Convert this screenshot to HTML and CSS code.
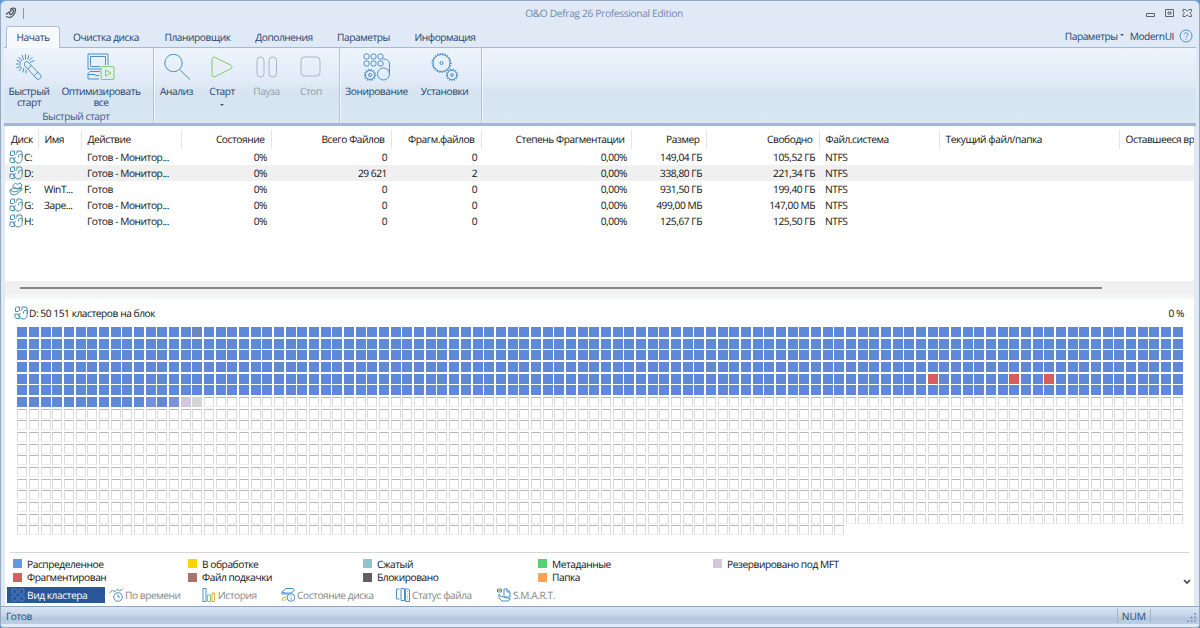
FILE: index.html
```html
<!DOCTYPE html>
<html lang="ru">
<head>
    <meta charset="UTF-8">
    <title>O&amp;O Defrag 26 Professional Edition</title>
    <link rel="stylesheet" href="styles.css">
</head>
<body>
<svg class="defs" width="0" height="0">
    <symbol id="disk" viewBox="0 0 14 14">
        <path d="M1.500 5V2L2.500 1H5.500v3.500L4.500 5.500H1.500zM1 8h3.500v1.500L5.500 11v1.500H2L1 11.500zM8 3.500V1h4l1 1v2M6.500 7C4.500 9 6 13 9 13c4 0 5-4 3.500-6.500M9.500 7.500V5.500L11 4.500h2.500v3M8 3.500L6.500 5"/>
    </symbol>
    <symbol id="ssd" viewBox="0 0 14 14">
        <path d="M3.500 4l3-3 2 1.500L11 1l2 2-1 2.500-4 1-3-1zM1 8l3-2 4 1 5-1v2l-4 3-3 2-4-1-1-2zM1 8l4 2 4-1 4-3"/>
    </symbol>
</svg>
<div class="window">
    <div class="titlebar">
        <svg class="app-logo" viewBox="0 0 12 12"><path d="M5 2.500C7 .5 11 .5 10.500 3.500 10 7 7 10.500 4.500 10.500M8.500 3C6 2 3.500 6 5 7.500 7 8 9 5 8.500 3M4 5L1 7.500M1 9.500l3.500 1"/></svg>
        <span class="quick-sep"></span>
        <span class="title">O&amp;O Defrag 26 Professional Edition</span>
        <svg class="win-buttons" viewBox="0 0 48 10">
            <path d="M1.500 5.500h8v3h-8zM20.500 1.500h8v7h-8zM23 4h3v2h-3z"/>
            <path d="M38 1.500h2.500l1.700 1.700 1.700-1.700h2.500v2L44.800 5l1.600 1.500v2h-2.500l-1.700-1.700-1.700 1.700H38v-2L39.600 5 38 3.500z"/>
        </svg>
    </div>
    <div class="tabs">
        <div class="tab active w-54">Начать</div>
        <div class="tab w-92">Очистка диска</div>
        <div class="tab w-91">Планировщик</div>
        <div class="tab w-82">Дополнения</div>
        <div class="tab w-77">Параметры</div>
        <div class="tab w-86">Информация</div>
        <div class="tab-tools">
            <span>Параметры</span><i class="caret"></i><span class="modern">ModernUI</span>
            <svg class="help" viewBox="0 0 14 14"><circle cx="7" cy="7" r="6"/><path d="M5 5.500C5 3.200 9 3.200 9 5.500 9 7 7 7 7 8.500M7 9.800v1"/></svg>
        </div>
    </div>
    <div class="ribbon">
        <div class="group">
            <div class="tools">
                <div class="tool w-50">
                    <svg viewBox="0 0 28 28">
                        <path d="M9.500 10.500c0-2 2-2.500 3.500-1.500l12.500 13c1.500 2.500-1 5-3.500 4L9.500 12.500zM13 15.500l3.500-3M19.500 22.500l3.500-3.500"/>
                        <path d="M10.500 1v5.500M7 2l1.500 5M3.500 4l3.500 4M1.500 7l4.500 2.500M1 11h5M1.500 15l4.500-2M4 18l3-4M7.500 19.500L9 15M14 2l-1.500 4.500M17.500 4L14 7.500M19.500 7.500L15 9.500M11 20.500V17"/>
                    </svg>
                    <span>Быстрый<br>старт</span>
                </div>
                <div class="tool w-94">
                    <svg viewBox="0 0 28 28">
                        <path d="M1 1h20v11M14 16H1V1M3.500 12.500v-9h15V12M3.500 13.500H13M3 18.500l-2 2V26h11M3 18.500h10M1 21.500h6l2 1h3"/>
                        <g class="green"><rect x="14" y="13.500" width="13" height="13" rx="1"/><path d="M18.500 17l5.500 3-5.500 3z"/></g>
                    </svg>
                    <span>Оптимизировать<br>все</span>
                </div>
            </div>
            <div class="group-title">Быстрый старт</div>
        </div>
        <div class="group">
            <div class="tools">
                <div class="tool w-45">
                    <svg viewBox="0 0 28 28"><circle cx="10.500" cy="10" r="8.700"/><path d="M16.500 16.500L27 26.500"/></svg>
                    <span>Анализ</span>
                </div>
                <div class="tool w-46">
                    <svg class="green" viewBox="0 0 28 28"><path d="M4 6.500c0-2 1.500-3 3.300-2l15.500 7.700c1.700 1 1.700 2.600 0 3.500L7.300 23.500c-1.800 1-3.300 0-3.300-2z"/></svg>
                    <span>Старт</span>
                    <i class="caret"></i>
                </div>
                <div class="tool off w-43">
                    <svg viewBox="0 0 28 28"><rect x="4" y="4" width="7" height="20" rx="3.500"/><rect x="16" y="4" width="7.500" height="20" rx="3.500"/></svg>
                    <span>Пауза</span>
                </div>
                <div class="tool off w-46">
                    <svg viewBox="0 0 28 28"><rect x="4" y="4" width="19" height="19" rx="3.500"/></svg>
                    <span>Стоп</span>
                </div>
            </div>
        </div>
        <div class="group">
            <div class="tools">
                <div class="tool w-73">
                    <svg viewBox="0 0 28 28">
                        <rect x="1" y="1" width="5" height="5" rx="1.800"/><rect x="8" y="1" width="5" height="5" rx="1.800"/><rect x="15" y="1" width="5" height="5" rx="1.800"/>
                        <rect x="1" y="8" width="5" height="5" rx="1.800"/><rect x="8" y="8" width="5" height="5" rx="1.800"/><rect x="15" y="8" width="5" height="5" rx="1.800"/>
                        <path d="M20 6c4 0 6.500 2 6.500 5v10"/><circle cx="20.500" cy="21" r="6"/>
                        <circle cx="7" cy="22" r="4.500"/><circle class="teeth" cx="7" cy="22" r="5.500"/><circle cx="7" cy="22" r="1.500"/>
                    </svg>
                    <span>Зонирование</span>
                </div>
                <div class="tool w-63">
                    <svg viewBox="0 0 28 28">
                        <circle cx="10.500" cy="10" r="8.500"/><circle class="teeth" cx="10.500" cy="10" r="9.300"/><circle cx="10.500" cy="10" r="1.500"/>
                        <circle cx="21" cy="22" r="4.700"/><circle class="teeth" cx="21" cy="22" r="5.500"/><circle cx="21" cy="22" r="1.300"/>
                    </svg>
                    <span>Установки</span>
                </div>
            </div>
        </div>
    </div>
    <div class="content">
        <div class="volumes">
            <table>
                <colgroup>
                    <col class="c-disk"><col class="c-name"><col class="c-action"><col class="c-state"><col class="c-files"><col class="c-frag"><col class="c-degree"><col class="c-size"><col class="c-free"><col class="c-fs"><col class="c-current"><col class="c-left">
                </colgroup>
                <thead>
                    <tr><th>Диск</th><th>Имя</th><th>Действие</th><th class="num">Состояние</th><th class="num">Всего Файлов</th><th class="num">Фрагм.файлов</th><th class="num">Степень Фрагментации</th><th class="num">Размер</th><th class="num">Свободно</th><th>Файл.система</th><th>Текущий файл/папка</th><th>Оставшееся вр</th></tr>
                </thead>
                <tbody>
                    <tr><td><svg class="icon"><use href="#disk"/></svg>C:</td><td></td><td>Готов - Монитор...</td><td class="num">0%</td><td class="num">0</td><td class="num">0</td><td class="num">0,00%</td><td class="num">149,04 ГБ</td><td class="num">105,52 ГБ</td><td>NTFS</td><td></td><td></td></tr>
                    <tr class="selected"><td><svg class="icon"><use href="#disk"/></svg>D:</td><td></td><td>Готов - Монитор...</td><td class="num">0%</td><td class="num">29 621</td><td class="num">2</td><td class="num">0,00%</td><td class="num">338,80 ГБ</td><td class="num">221,34 ГБ</td><td>NTFS</td><td></td><td></td></tr>
                    <tr><td><svg class="icon"><use href="#ssd"/></svg>F:</td><td>WinT...</td><td>Готов</td><td class="num">0%</td><td class="num">0</td><td class="num">0</td><td class="num">0,00%</td><td class="num">931,50 ГБ</td><td class="num">199,40 ГБ</td><td>NTFS</td><td></td><td></td></tr>
                    <tr><td><svg class="icon"><use href="#disk"/></svg>G:</td><td>Заре...</td><td>Готов - Монитор...</td><td class="num">0%</td><td class="num">0</td><td class="num">0</td><td class="num">0,00%</td><td class="num">499,00 МБ</td><td class="num">147,00 МБ</td><td>NTFS</td><td></td><td></td></tr>
                    <tr><td><svg class="icon"><use href="#disk"/></svg>H:</td><td></td><td>Готов - Монитор...</td><td class="num">0%</td><td class="num">0</td><td class="num">0</td><td class="num">0,00%</td><td class="num">125,67 ГБ</td><td class="num">125,50 ГБ</td><td>NTFS</td><td></td><td></td></tr>
                </tbody>
            </table>
        </div>
        <div class="scrollbar"><div class="thumb"></div></div>
        <div class="splitter"></div>
        <div class="map-head">
            <svg class="icon"><use href="#disk"/></svg><span>D: 50 151 кластеров на блок</span><span class="percent">0 %</span>
        </div>
        <div class="clusters" id="clusters"></div>
        <div class="legend">
            <div><i class="used"></i>Распределенное</div>
            <div><i class="busy"></i>В обработке</div>
            <div><i class="packed"></i>Сжатый</div>
            <div><i class="meta"></i>Метаданные</div>
            <div><i class="mft"></i>Резервировано под MFT</div>
            <div><i class="frag"></i>Фрагментирован</div>
            <div><i class="swap"></i>Файл подкачки</div>
            <div><i class="locked"></i>Блокировано</div>
            <div><i class="folder"></i>Папка</div>
            <svg class="chevron" viewBox="0 0 8 6"><path d="M1 1l3 3 3-3"/></svg>
        </div>
        <div class="views">
            <div class="view current w-98"><svg viewBox="0 0 14 14"><rect x="1" y="1" width="5" height="5" rx="1.500"/><rect x="8" y="1" width="5" height="5" rx="1.500"/><rect x="1" y="8" width="5" height="5" rx="1.500"/><rect x="8" y="8" width="5" height="5" rx="1.500"/></svg>Вид кластера</div>
            <div class="view w-93"><svg viewBox="0 0 14 14"><circle cx="9" cy="9" r="4.300"/><path d="M9 6.500V9h2M.5 5l3-3 2 2 3-3 2 2 3-2"/></svg>По времени</div>
            <div class="view w-79"><svg viewBox="0 0 14 14"><path d="M1 .5h3v13H1z"/><path class="green" d="M5.500 7h3v6.500h-3z"/><path class="orange" d="M10 5h2.500v8.500H10z"/></svg>История</div>
            <div class="view w-115"><svg viewBox="0 0 14 14"><path d="M1 4l4-3.500h7l1.500 2L10 5H4zM1 4v2h6"/><circle cx="10" cy="9.500" r="3.800"/><path d="M10 7.500v.8M10 9.500v2"/><path class="orange" d="M1 13c0-3 1-4 4-4"/><path class="green" d="M3.500 13c0-1 .5-2 2-2"/></svg>Состояние диска</div>
            <div class="view w-101"><svg viewBox="0 0 14 14"><path d="M3.500 1h-3v10h3M5 .5h3.500v12H5zM9.500 1h3l1 1v11.500h-4z"/><path class="green" d="M11 3.500h1M11 8.500h1"/><path class="orange" d="M11 6h1M11 11h1"/></svg>Статус файла</div>
            <div class="view"><svg viewBox="0 0 14 14"><path d="M7 1h3l3 3v5H7zM10 1v3h3M.5 1h4v3h-4zM2 6v4l3 3h6l2.500-2-3-1-4-1-3-1z"/><path class="green" d="M1 2.500h3"/></svg>S.M.A.R.T.</div>
        </div>
    </div>
    <div class="statusbar">
        <span>Готов</span>
        <span class="num-lock">NUM</span>
        <svg class="grip" viewBox="0 0 10 10"><path d="M8 0h2v2H8zM4 4h2v2H4zM8 4h2v2H8zM0 8h2v2H0zM4 8h2v2H4zM8 8h2v2H8z"/></svg>
    </div>
</div>
<script>
    // 100 blocks per row, the last row is incomplete
    const total = 1771;
    const usedCount = 614;
    const special = {15: 'dim', 478: 'frag', 485: 'frag', 488: 'frag', 611: 'light', 613: 'violet', 614: 'mft', 615: 'grey'};
    const clusters = document.getElementById('clusters');

    for (let i = 0; i < total; i++) {
        const block = document.createElement('i');
        block.className = special[i] || (i < usedCount ? 'used' : 'free');
        clusters.appendChild(block);
    }
</script>
</body>
</html>
```
FILE: styles.css
```css
* {
    box-sizing: border-box;
}

body {
    margin: 0;
    background: #5b96d8;
    font-family: "Open Sans", "Noto Sans", sans-serif;
    font-size: 10.200px;
    letter-spacing: -0.450px;
    text-rendering: geometricPrecision;
    line-height: 12px;
    color: #111;
}

svg {
    fill: none;
    stroke: #4b8fc6;
    stroke-width: 1;
    flex: none;
}

.defs {
    position: absolute;
}

.window {
    width: 1200px;
    height: 628px;
    display: flex;
    flex-direction: column;
    background: #dfeaf6;
    border: 1px solid #93a9c2;
    border-radius: 6px 6px 4px 4px;
    overflow: hidden;
}

.titlebar {
    height: 25px;
    display: flex;
    align-items: center;
    padding: 0 6px 1px 4px;
}

.app-logo {
    width: 12px;
    height: 12px;
    stroke: #4d5560;
    stroke-width: 1.300;
}

.quick-sep {
    width: 1px;
    height: 11px;
    margin-left: 6px;
    background: #8998a9;
}

.title {
    flex: 1;
    text-align: center;
    padding-left: 39px;
    letter-spacing: -0.330px;
    color: #7488ad;
}

.win-buttons {
    width: 48px;
    height: 10px;
    stroke: #5d646b;
}

.tabs {
    height: 21px;
    display: flex;
    padding-left: 5px;
    color: #26436f;
}

.tab {
    height: 21px;
    padding-top: 5px;
    text-align: center;
    white-space: nowrap;
}

.tab.active {
    height: 22px;
    background: #f6faff;
    border: 1px solid #afbfd2;
    border-bottom: 0;
    border-radius: 3px 3px 0 0;
    padding-top: 4px;
    z-index: 1;
}

.tab-tools {
    display: flex;
    align-items: center;
    margin-left: auto;
    padding: 0 6px 2px 0;
}

.caret {
    width: 0;
    height: 0;
    border: 2.500px solid transparent;
    border-top-color: #3f5575;
    border-bottom: 0;
    margin: 0 6px 2px 2px;
}

.help {
    width: 14px;
    height: 14px;
    margin-left: 5px;
}

.ribbon {
    height: 79px;
    margin: 0 3px;
    display: flex;
    background: linear-gradient(#edf4fd, #e1ebf7 45%, #d6e3f1 60%, #d9e7f5);
    border-top: 1px solid #a5b9d0;
    border-bottom: 3px solid #a4b8d3;
    color: #26436f;
}

.group {
    padding: 5px 5px 0 0;
    border-right: 1px solid #b1c3d8;
    box-shadow: 1px 0 #f2f7fd;
}

.tools {
    display: flex;
    height: 57px;
}

.tool {
    display: flex;
    flex-direction: column;
    align-items: center;
    text-align: center;
    line-height: 11px;
    white-space: nowrap;
}

.tool svg {
    width: 28px;
    height: 28px;
    margin-bottom: 5px;
}

.tool .caret {
    margin: 7px 0 0;
}

.tool.off {
    color: #929eac;
}

.tool.off svg {
    stroke: #abb6c2;
}

.green,
svg.green {
    stroke: #82cb65;
}

.orange {
    stroke: #d9b044;
}

.teeth {
    stroke-dasharray: 1.200 1.400;
    stroke-width: 1.500;
}

.group-title {
    text-align: center;
    color: #405b84;
}

.content {
    flex: 1;
    margin: 0 5px 0 4px;
    background: #fff;
    display: flex;
    flex-direction: column;
    overflow: hidden;
}

.volumes {
    height: 155px;
    padding-top: 4px;
    overflow: hidden;
}

table {
    width: 1249px;
    margin-left: -1px;
    table-layout: fixed;
    border-collapse: collapse;
}

th,
td {
    height: 16px;
    padding: 0 4px 0 6px;
    text-align: left;
    font-weight: normal;
    white-space: nowrap;
    overflow: hidden;
}

th {
    height: 19px;
    padding-bottom: 1px;
    border-right: 1px solid #e3e6e9;
}

th:first-child {
    padding: 0 0 1px 7px;
}

th.num {
    text-align: right;
    padding-right: 6px;
}

td.num {
    text-align: right;
}

td:first-child {
    padding: 0 0 0 5px;
}

.icon {
    width: 14px;
    height: 14px;
    margin-right: 1px;
    stroke: #438fae;
    vertical-align: -3px;
}

.selected {
    background: #f0f0f0;
}

.c-disk { width: 34px; }
.c-name { width: 43px; }
.c-action { width: 100px; }
.c-state { width: 90px; }
.c-files { width: 120px; }
.c-frag { width: 90px; }
.c-degree { width: 150px; }
.c-size { width: 75px; }
.c-free { width: 113px; }
.c-fs { width: 120px; }
.c-current { width: 180px; }
.c-left { width: 134px; }

.scrollbar {
    height: 13px;
    padding: 6px 0 0 15px;
    background: #f0f0f0;
}

.thumb {
    width: 1082px;
    height: 2px;
    background: #858585;
}

.splitter {
    height: 5px;
    background: #f5f6f7;
}

.map-head {
    height: 28px;
    display: flex;
    align-items: center;
    padding: 0 10px 1px 9px;
}

.percent {
    margin-left: auto;
}

.clusters {
    height: 225px;
    display: grid;
    grid-template-columns: repeat(100, 10px);
    grid-auto-rows: 10px;
    gap: 1.670px 1.680px;
    align-content: start;
    padding-left: 12.300px;
}

.clusters .free {
    border: 1px solid #dcdcdc;
    border-top-color: #b8b8b8;
    border-bottom-color: #eee;
}

.used { background: #5f89d8; }
.frag { background: #d65e5e; }
.dim { background: #6f86bd; }
.light { background: #6f94de; }
.violet { background: #7b93d6; }
.mft { background: #d0c8dd; }
.grey { background: #d4d4d6; }
.busy { background: #f8d600; }
.packed { background: #8ec6d0; }
.meta { background: #58d070; }
.swap { background: #a87468; }
.locked { background: #616161; }
.folder { background: #fca355; }

.legend {
    position: relative;
    display: grid;
    grid-template-columns: repeat(5, 175px);
    grid-auto-rows: 13.500px;
    height: 35px;
    margin: 0 5px;
    padding: 4px 0 0 3px;
    border-top: 1px solid #d6d6d6;
}

.legend div {
    display: flex;
    align-items: center;
    white-space: nowrap;
}

.legend i {
    width: 9px;
    height: 9px;
    margin-right: 5px;
}

.legend .used {
    background: #6695ea;
}

.chevron {
    position: absolute;
    right: -2px;
    bottom: 2px;
    width: 8px;
    height: 6px;
    stroke: #444;
    stroke-width: 1.700;
}

.views {
    display: flex;
    padding-left: 2px;
    color: #858585;
}

.view {
    display: flex;
    align-items: center;
    height: 16px;
    padding-left: 4px;
    white-space: nowrap;
}

.view svg {
    width: 14px;
    height: 14px;
    margin-right: 2px;
}

.view.current {
    background: #2b579a;
    color: #fff;
}

.statusbar {
    height: 21px;
    display: flex;
    align-items: center;
    padding: 0 3px 2px 5px;
    background: linear-gradient(#d9e5f2, #c4d4e8 45%, #b4c7de 55%, #bccee4 85%, #e1ebf6 86%);
    border-top: 1px solid #8fa5c1;
    color: #2e4a75;
}

.num-lock {
    margin-left: auto;
    padding: 1px 4px;
    border: solid #9fb3cb;
    border-width: 0 1px;
    letter-spacing: 0;
}

.grip {
    width: 9px;
    height: 9px;
    margin: 3px 0 0 36px;
    fill: #8098b8;
    stroke: none;
}

.w-43 { width: 43px; }
.w-45 { width: 45px; }
.w-46 { width: 46px; }
.w-50 { width: 50px; }
.w-54 { width: 54px; }
.w-63 { width: 63px; }
.w-73 { width: 73px; }
.w-77 { width: 77px; }
.w-79 { width: 79px; }
.w-82 { width: 82px; }
.w-86 { width: 86px; }
.w-91 { width: 91px; }
.w-92 { width: 92px; }
.w-93 { width: 93px; }
.w-94 { width: 94px; }
.w-98 { width: 98px; }
.w-101 { width: 101px; }
.w-115 { width: 115px; }
```
